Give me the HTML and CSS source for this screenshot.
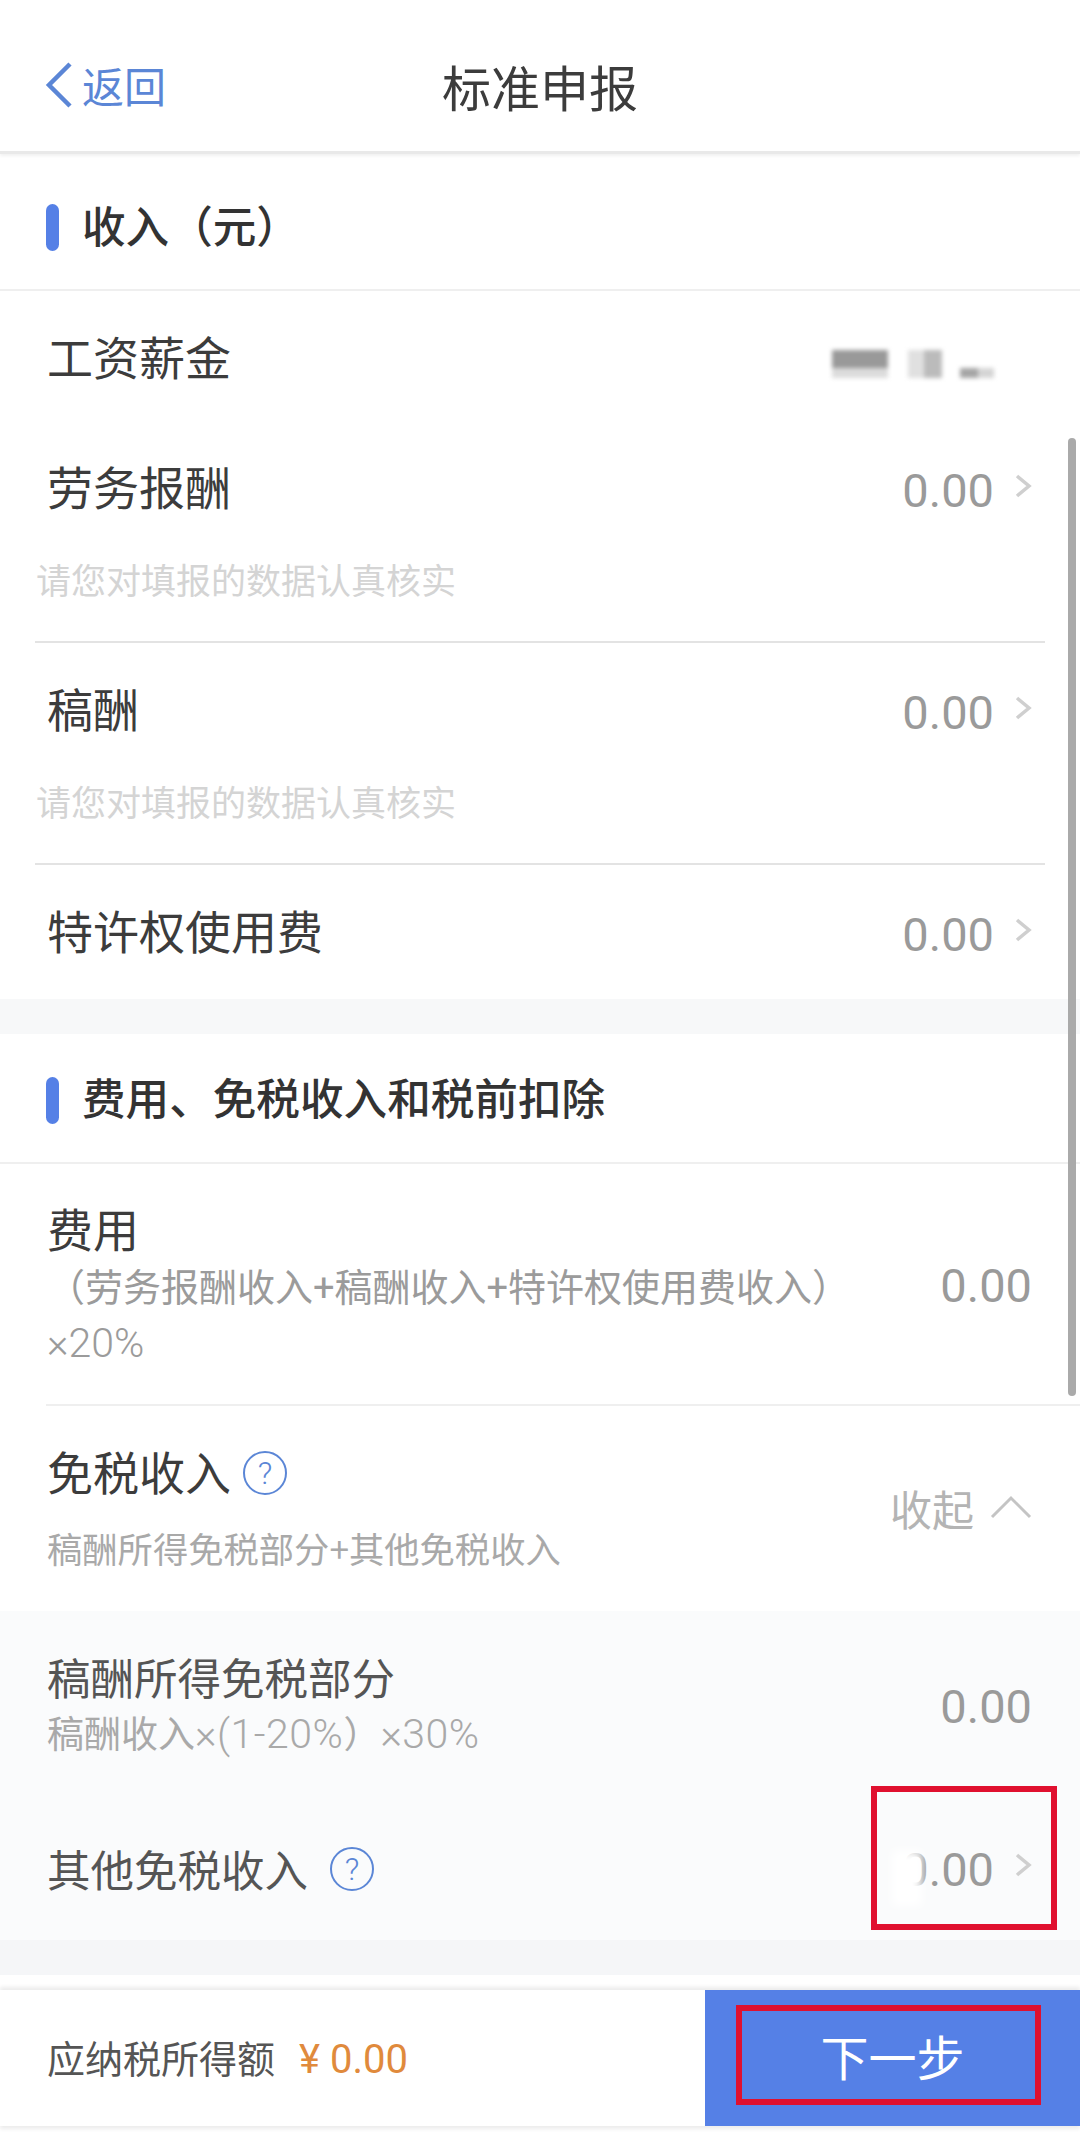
FILE: index.html
```html
<!DOCTYPE html>
<html lang="zh-CN">
  <head>
    <meta charset="UTF-8" />
    <title>标准申报</title>
    <link rel="stylesheet" href="styles.css">
  </head>
  <body>
    <div class="page">
      <header class="nav">
        <div class="back">
          <svg class="back-arrow" viewBox="0 0 28 46" width="28" height="46">
            <path d="M25 2 L4 23 L25 44" />
          </svg>
          <span>返回</span>
        </div>
        <h1>标准申报</h1>
      </header>

      <div class="head head-first"><i></i><span>收入（元）</span></div>

      <div class="entry entry-salary">
        <div class="row">
          <span class="title">工资薪金</span>
          <span class="redacted"><b class="d1"></b><b class="d2"></b><b class="d3"></b><b class="d4"></b><b class="d5"></b></span>
        </div>
      </div>
      <div class="entry line">
        <div class="row">
          <span class="title">劳务报酬</span>
          <span class="value">0.00<svg class="chev" viewBox="0 0 18 24" width="18" height="24"><path d="M3 2 L15 12 L3 22" /></svg></span>
        </div>
        <p class="hint">请您对填报的数据认真核实</p>
      </div>
      <div class="entry line">
        <div class="row">
          <span class="title">稿酬</span>
          <span class="value">0.00<svg class="chev" viewBox="0 0 18 24" width="18" height="24"><path d="M3 2 L15 12 L3 22" /></svg></span>
        </div>
        <p class="hint">请您对填报的数据认真核实</p>
      </div>
      <div class="entry entry-last">
        <div class="row">
          <span class="title">特许权使用费</span>
          <span class="value">0.00<svg class="chev" viewBox="0 0 18 24" width="18" height="24"><path d="M3 2 L15 12 L3 22" /></svg></span>
        </div>
      </div>

      <div class="band"></div>

      <div class="head head-second"><i></i><span>费用、免税收入和税前扣除</span></div>

      <div class="fee">
        <div class="fee-text">
          <div class="title">费用</div>
          <div class="sub">（劳务报酬收入+稿酬收入+特许权使用费收入）<span class="num">×20%</span></div>
        </div>
        <span class="value plain">0.00</span>
      </div>

      <div class="exempt">
        <div>
          <div class="title">免税收入<span class="help help-low">?</span></div>
          <div class="exempt-sub">稿酬所得免税部分+其他免税收入</div>
        </div>
        <div class="fold">
          收起
          <svg viewBox="0 0 42 24" width="42" height="24"><path d="M2 22 L21 3 L40 22" /></svg>
        </div>
      </div>

      <div class="panel">
        <div class="panel-row panel-first">
          <div class="panel-text">
            <div class="panel-title">稿酬所得免税部分</div>
            <div class="panel-sub">稿酬收入<span class="num">×(1-20%</span>）<span class="num">×30%</span></div>
          </div>
          <span class="value plain">0.00</span>
        </div>
        <div class="panel-row panel-second">
          <div class="panel-title">其他免税收入<span class="help help-wide">?</span></div>
          <span class="value faded">0.00<svg class="chev" viewBox="0 0 18 24" width="18" height="24"><path d="M3 2 L15 12 L3 22" /></svg></span>
        </div>
      </div>

      <div class="band band-dark"></div>

      <footer class="foot">
        <div class="foot-left">应纳税所得额<span class="amount">¥ 0.00</span></div>
        <div class="next">下一步</div>
      </footer>

      <div class="scrollbar"></div>
      <div class="mark mark-value"></div>
      <div class="mark mark-next"></div>
    </div>
  </body>
</html>
```

FILE: styles.css
```css
* {
  box-sizing: border-box;
}
body {
  margin: 0;
  background-color: #fff;
  color: #3c3c3c;
  font-family: "Noto Sans CJK SC", "Noto Sans", sans-serif;
}
.page {
  position: relative;
  width: 1080px;
  height: 2155px;
  overflow: hidden;
}
.nav {
  height: 154px;
  display: flex;
  align-items: center;
  justify-content: center;
  position: relative;
  padding-top: 20px;
  border-bottom: 3px solid #e9e9e9;
  box-shadow: 0 2px 3px #f1f1f1;
}
.nav h1 {
  margin: 0;
  font-size: 49px;
  font-weight: 400;
  line-height: 60px;
}
.back {
  position: absolute;
  left: 45px;
  top: 60px;
  display: flex;
  align-items: center;
  gap: 9px;
  color: #5b86d6;
  font-size: 42px;
  line-height: 50px;
}
.back-arrow path {
  fill: none;
  stroke: #5b86d6;
  stroke-width: 4.5;
}
.head {
  display: flex;
  align-items: center;
  font-size: 43.6px;
  font-weight: 500;
  color: #333;
  border-bottom: 2px solid #efefef;
}
.head span {
  padding-bottom: 8px;
}
.head i {
  display: block;
  width: 13px;
  height: 47px;
  margin: 0 23px 0 46px;
  border-radius: 7px;
  background-color: #5580e6;
}
.head-first {
  height: 137px;
  padding-top: 12px;
}
.head-second {
  height: 130px;
  padding-top: 4px;
}
.entry {
  padding-top: 7px;
}
.entry-salary {
  padding-bottom: 1px;
}
.entry-last {
  padding-bottom: 5px;
}
.row {
  height: 122px;
  display: flex;
  align-items: center;
  justify-content: space-between;
  padding: 0 48px 8px 47px;
}
.row .value {
  margin-top: 10px;
}
.title {
  font-size: 46px;
  color: #3c3c3c;
}
.value {
  display: flex;
  align-items: center;
  font-family: Roboto, "Noto Sans", sans-serif;
  font-size: 47px;
  color: #9a9a9a;
}
.chev {
  margin: -8px 0 0 20px;
}
.chev path {
  fill: none;
  stroke: #cfcfcf;
  stroke-width: 3.5;
}
.hint {
  margin: 8px 0 0;
  padding-left: 36px;
  height: 83px;
  font-size: 35px;
  line-height: 42px;
  color: #d4d4d4;
}
.line {
  position: relative;
  height: 222px;
}
.line::after {
  content: "";
  position: absolute;
  left: 35px;
  right: 35px;
  bottom: 0;
  height: 2px;
  background-color: #e3e3e3;
}
.band {
  height: 35px;
  background-color: #f7f8f9;
}
.fee {
  height: 242px;
  margin-left: 46px;
  padding: 33px 48px 0 1px;
  display: flex;
  justify-content: space-between;
  border-bottom: 2px solid #efefef;
}
.fee-text {
  width: 840px;
}
.fee-text .title {
  line-height: 60px;
}
.sub {
  margin-top: 4px;
  font-family: Roboto, "Noto Sans CJK SC", sans-serif;
  font-size: 38px;
  line-height: 55px;
  color: #9b9b9b;
}
.num {
  font-size: 41px;
  font-weight: 300;
}
.fee .value {
  height: 176px;
  align-self: flex-start;
}
.exempt {
  height: 205px;
  padding: 33px 48px 0 47px;
  display: flex;
  justify-content: space-between;
}
.exempt .title {
  display: flex;
  align-items: center;
  line-height: 62px;
}
.help {
  width: 44px;
  height: 44px;
  margin-left: 12px;
  display: flex;
  align-items: center;
  justify-content: center;
  border: 2px solid #5b86d6;
  border-radius: 50%;
  color: #5b86d6;
  font-family: Roboto, sans-serif;
  font-size: 32px;
  font-weight: 300;
}
.help-low {
  margin-top: 6px;
}
.help-wide {
  margin-left: 22px;
}
.exempt-sub {
  margin-top: 24px;
  font-size: 35.3px;
  line-height: 46px;
  color: #a9a9a9;
}
.fold {
  display: flex;
  align-items: center;
  gap: 16px;
  height: 60px;
  margin-top: 38px;
  font-size: 42px;
  color: #b4b4b4;
}
.fold svg path {
  fill: none;
  stroke: #c4c4c4;
  stroke-width: 3;
}
.panel {
  height: 329px;
  background-color: #fafbfc;
}
.panel-row {
  display: flex;
  align-items: center;
  justify-content: space-between;
  padding: 0 48px 0 47px;
}
.panel-first {
  height: 190px;
}
.panel-second {
  height: 139px;
  padding-bottom: 3px;
}
.panel-text {
  padding-bottom: 4px;
}
.panel-title {
  display: flex;
  align-items: center;
  font-size: 43.5px;
  line-height: 58px;
  color: #555;
}
.panel-sub {
  margin-top: 3px;
  font-family: Roboto, "Noto Sans CJK SC", sans-serif;
  font-size: 37px;
  line-height: 50px;
  color: #a9a9a9;
}
.panel-sub .num {
  letter-spacing: 0.5px;
}
.faded {
  position: relative;
}
.faded::before {
  content: "";
  position: absolute;
  left: -10px;
  top: 8px;
  width: 30px;
  height: 56px;
  background-color: #fff;
  filter: blur(5px);
}
.band-dark {
  background-color: #f5f6f8;
}
.foot {
  height: 136px;
  margin-top: 15px;
  display: flex;
  align-items: center;
  justify-content: space-between;
  box-shadow: 0 -3px 4px #ececec, 0 3px 4px #ececec;
}
.foot-left {
  padding: 0 0 4px 47px;
  font-size: 38px;
  color: #555;
}
.amount {
  margin-left: 24px;
  font-family: Roboto, "Noto Sans", sans-serif;
  font-size: 40px;
  color: #e08a3c;
}
.next {
  width: 375px;
  height: 136px;
  padding-bottom: 6px;
  display: flex;
  align-items: center;
  justify-content: center;
  background-color: #5580e6;
  color: #fff;
  font-size: 48px;
}
.redacted {
  display: flex;
  align-items: flex-end;
  height: 30px;
  margin: 16px 38px 0 0;
  filter: blur(2px);
}
.redacted b {
  display: block;
}
.d1 {
  width: 56px;
  height: 28px;
  background-image: linear-gradient(#999 65%, #dcdcdc 65%);
}
.d2 {
  width: 16px;
  height: 28px;
  margin-left: 20px;
  background-color: #e0e0e0;
}
.d3 {
  width: 18px;
  height: 28px;
  background-color: #bbb;
}
.d4 {
  width: 18px;
  height: 10px;
  margin-left: 18px;
  background-color: #a5a5a5;
}
.d5 {
  width: 16px;
  height: 10px;
  background-color: #d5d5d5;
}
/* overlays */
.scrollbar {
  position: absolute;
  left: 1068px;
  top: 438px;
  width: 8px;
  height: 958px;
  border-radius: 4px;
  background-color: #aaa;
}
.mark {
  position: absolute;
  border: 6px solid #e0102f;
}
.mark-value {
  left: 871px;
  top: 1786px;
  width: 186px;
  height: 144px;
}
.mark-next {
  left: 736px;
  top: 2005px;
  width: 305px;
  height: 100px;
}
```
